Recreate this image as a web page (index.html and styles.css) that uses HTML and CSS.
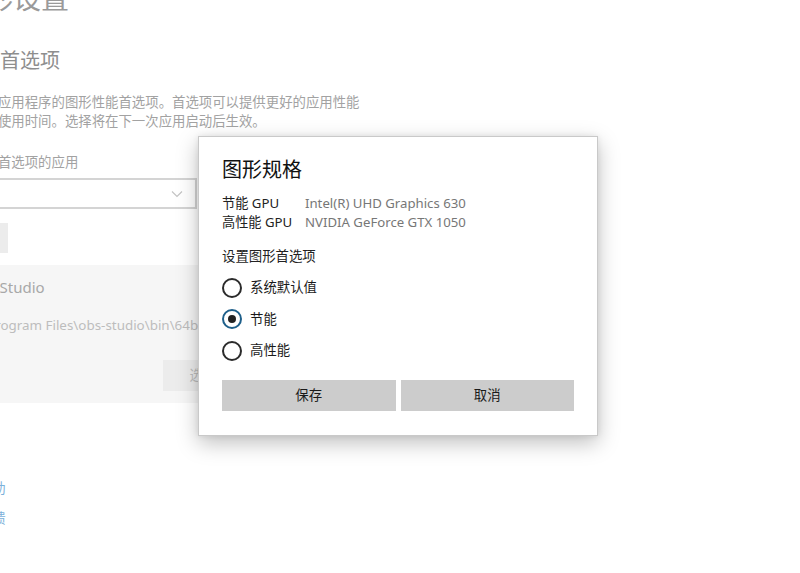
FILE: index.html
```html
<!DOCTYPE html>
<html lang="zh-CN">
<head>
  <meta charset="UTF-8" />
  <title>图形设置</title>
  <link rel="stylesheet" href="styles.css">
</head>
<body>
  <div class="page">
    <h1 class="page-title">图形设置</h1>
    <h2 class="page-heading">图形性能首选项</h2>
    <p class="page-desc">自定义特定应用程序的图形性能首选项。首选项可以提供更好的应用性能或节省电池使用时间。选择将在下一次应用启动后生效。</p>

    <div class="field-label">选择要设置首选项的应用</div>
    <div class="select">
      <span>经典应用</span>
      <svg class="chevron" width="12" height="8" viewBox="0 0 12 8"><path d="M1 1.5 L6 6.5 L11 1.5" fill="none" stroke="#c4c4c4" stroke-width="1.2"/></svg>
    </div>
    <div class="browse">浏览</div>

    <div class="app-item">
      <div class="app-name">OBS Studio</div>
      <div class="app-pref">节能</div>
      <div class="app-path">C:\Program Files\obs-studio\bin\64bit\obs64.exe</div>
      <div class="app-actions">
        <span class="app-btn">选项</span>
        <span class="app-btn">删除</span>
      </div>
    </div>

    <div class="links">
      <a class="link">获取帮助</a>
      <a class="link">提供反馈</a>
    </div>
  </div>

  <div class="dialog">
    <div class="dialog-title">图形规格</div>
    <div class="gpu-table">
      <span class="gpu-key">节能 GPU</span><span class="gpu-val">Intel(R) UHD Graphics 630</span>
      <span class="gpu-key">高性能 GPU</span><span class="gpu-val">NVIDIA GeForce GTX 1050</span>
    </div>
    <div class="pref-label">设置图形首选项</div>
    <div class="radios">
      <div class="radio"><span class="dot"></span><span>系统默认值</span></div>
      <div class="radio checked"><span class="dot"></span><span>节能</span></div>
      <div class="radio"><span class="dot"></span><span>高性能</span></div>
    </div>
    <div class="dialog-buttons">
      <span class="btn">保存</span>
      <span class="btn">取消</span>
    </div>
  </div>
</body>
</html>
```

FILE: styles.css
```css
body {
  margin: 0;
  width: 800px;
  height: 573px;
  overflow: hidden;
  position: relative;
  background: #fff;
  font-family: "Noto Sans", "Noto Sans CJK SC", sans-serif;
}

.page {
  margin-left: -69px;
  width: 500px;
}

.page-title {
  margin: -20px 0 0 26px;
  font-size: 28px;
  line-height: 36px;
  font-weight: normal;
  color: #9a9a9a;
}

.page-heading {
  margin: 31px 0 0 -11px;
  font-size: 20px;
  line-height: 28px;
  font-weight: normal;
  color: #8e8e8e;
}

.page-desc {
  margin: 18px 0 0;
  width: 430px;
  font-size: 13.4px;
  line-height: 19px;
  color: #a2a2a2;
}

.field-label {
  margin-top: 22px;
  font-size: 13.4px;
  line-height: 19px;
  color: #a2a2a2;
}

.select {
  margin-top: 6px;
  height: 27px;
  width: 240px;
  border: 2px solid #d4d4d4;
  display: flex;
  align-items: center;
  justify-content: space-between;
  padding: 0 12px 0 10px;
  font-size: 13.4px;
  color: #b5b5b5;
}

.browse {
  margin-top: 14px;
  width: 77px;
  height: 30px;
  background: #ececec;
  color: #c0c0c0;
  font-size: 13.4px;
  line-height: 30px;
  text-align: center;
}

.app-item {
  margin-top: 12px;
  background: #f6f6f6;
  padding: 12px 0 10px 70px;
  width: 230px;
  height: 116px;
  overflow: hidden;
}

.app-name {
  font-size: 15px;
  line-height: 20px;
  color: #a8a8a8;
  margin-left: -35px;
}

.app-pref {
  font-size: 12px;
  line-height: 18px;
  color: #c4c4c4;
  margin-left: -74px;
}

.app-path {
  margin-top: 1px;
  margin-left: -31px;
  font-size: 13.4px;
  line-height: 19px;
  color: #bdbdbd;
  white-space: nowrap;
}

.app-actions {
  display: flex;
  gap: 8px;
  margin-top: 25px;
  margin-left: 162px;
}

.app-btn {
  flex: none;
  width: 80px;
  height: 31px;
  background: #ececec;
  color: #bdbdbd;
  font-size: 13.4px;
  line-height: 31px;
  text-align: center;
}

.links {
  margin-top: 76px;
  margin-left: 21px;
  display: flex;
  flex-direction: column;
  gap: 11px;
}

.link {
  font-size: 13.4px;
  line-height: 19px;
  color: #7db1da;
}

.dialog {
  position: absolute;
  left: 198px;
  top: 136px;
  width: 400px;
  height: 300px;
  box-sizing: border-box;
  padding: 19px 23px 0 23px;
  background: #fff;
  border: 1px solid #c9c9c9;
  box-shadow: 0 7px 20px rgba(0, 0, 0, 0.25), 0 0 6px rgba(0, 0, 0, 0.08);
  color: #1a1a1a;
}

.dialog-title {
  font-size: 20px;
  line-height: 28px;
  color: #111;
}

.gpu-table {
  margin-top: 10px;
  display: grid;
  grid-template-columns: 83px auto;
  font-size: 13.2px;
  line-height: 19px;
}

.gpu-key {
  color: #222;
}

.gpu-val {
  color: #777;
}

.pref-label {
  margin-top: 15px;
  font-size: 13.4px;
  line-height: 19px;
  color: #222;
}

.radios {
  margin-top: 6px;
  display: flex;
  flex-direction: column;
}

.radio {
  display: flex;
  align-items: center;
  height: 31.5px;
  font-size: 13.4px;
  line-height: 19px;
  color: #1a1a1a;
}

.dot {
  width: 16px;
  height: 16px;
  border: 2px solid #2b2b2b;
  border-radius: 50%;
  margin-right: 8px;
  position: relative;
}

.checked .dot {
  border-color: #1e5f8a;
}

.checked .dot::after {
  content: "";
  position: absolute;
  left: 4px;
  top: 4px;
  width: 8px;
  height: 8px;
  border-radius: 50%;
  background: #222;
}

.dialog-buttons {
  margin-top: 13px;
  display: flex;
  gap: 5px;
}

.btn {
  flex: 1;
  height: 31px;
  background: #cccccc;
  font-size: 13.4px;
  line-height: 31px;
  text-align: center;
  color: #1a1a1a;
}
```
